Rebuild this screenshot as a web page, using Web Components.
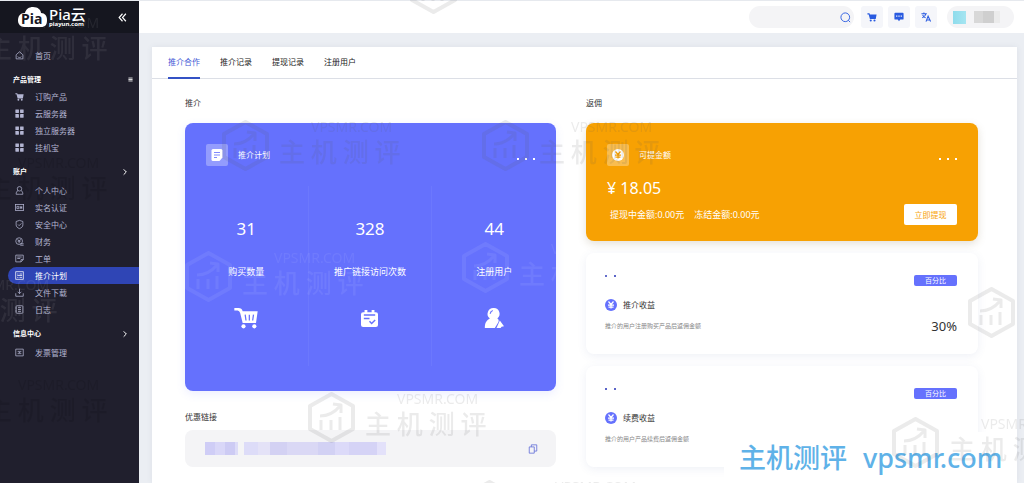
<!DOCTYPE html>
<html lang="zh-CN">
<head>
<meta charset="utf-8">
<title>Pia云 推介计划</title>
<style>
body { margin: 0; font-family: "Noto Sans", "Noto Sans CJK SC", sans-serif; font-size: 8px; line-height: 12px; color: #333; background: #ebeef3; }
</style>
</head>
<body>
<pia-app></pia-app>
<script>
const define = (name, html, setup) => {
  const tpl = document.createElement('template');
  tpl.innerHTML = '<style>:host,*{box-sizing:border-box}button{font:inherit;color:inherit;border:0;padding:0;margin:0;background:none;cursor:pointer}a{color:inherit;text-decoration:none}</style>' + html;
  customElements.define(name, class extends HTMLElement {
    constructor() {
      super();
      this.attachShadow({ mode: 'open' }).append(tpl.content.cloneNode(true));
    }
    connectedCallback() { if (setup) setup(this, this.shadowRoot); }
  });
};

/* Line icons use the stroke, solid icons set fill on their own shapes. All on a 24 unit grid. */
const S = 'fill="currentColor" stroke="none"';
const ICONS = {
  home: '<path d="M3 10 12 2l9 8v11H3zM7 15c2 3 8 3 10 0"/>',
  cart: `<path ${S} d="M1 3h5l1 3h16l-2 11H7L4 6H1z"/><circle ${S} cx="9" cy="20.500" r="2.500"/><circle ${S} cx="18" cy="20.500" r="2.500"/>`,
  grid: `<g ${S}><rect x="1" y="1" width="9.500" height="9.500" rx="1"/><rect x="13.500" y="1" width="9.500" height="9.500" rx="1"/><rect x="1" y="13.500" width="9.500" height="9.500" rx="1"/><rect x="13.500" y="13.500" width="9.500" height="9.500" rx="1"/></g>`,
  user: '<circle cx="12" cy="7.500" r="6"/><path d="M8 12c-4 2-5 6-5 10h18c0-4-1-8-5-10"/>',
  idcard: '<rect x="1" y="4" width="22" height="16"/><path d="M5 9h5v6H5zM14 8v8M18 8v8M14 12h5"/>',
  shield: '<path d="M12 1 21 4v9c0 5-4 8-9 10-5-2-9-5-9-10V4zM8 12l3 3 6-6"/>',
  money: '<circle cx="11" cy="11" r="9"/><path d="m7 6 4 5 4-5M7 11h8M11 11v6M14 18h9M14 22h9"/>',
  ticket: '<path d="M2 3h20v12l-6 6H2zM6 8h12M6 12h8M22 15h-6v6"/>',
  plan: '<rect x="2" y="2" width="20" height="20"/><path d="M6 8h3M12 8h7M6 12h13M6 17h3M12 17h7"/>',
  download: '<path d="M2 14v8h20v-8M12 2v13M7 10l5 5 5-5"/>',
  log: '<rect x="3" y="2" width="18" height="20" rx="2"/><path d="M8 7h8M8 12h8M8 17h8M1 8h3M1 16h3"/>',
  invoice: '<path d="M2 3h20v18H2zM7 9h10M7 15h10M10 12h4"/>',
  right: '<path d="m8 4 8 8-8 8" stroke-width="3"/>',
  menu: '<path d="M2 5h20M2 12h20M2 19h20" stroke-width="4"/>',
  collapse: '<path d="m12 2-9 10 9 10M21 2l-9 10 9 10" stroke-width="3"/>',
  search: '<circle cx="11.500" cy="11.500" r="9.500"/><path d="m18 18 4 4"/>',
  chat: `<path ${S} d="M3 2h18q2 0 2 2v12q0 2-2 2h-6l-3 4-3-4H3q-2 0-2-2V4q0-2 2-2z"/><path stroke="#f5f6fa" stroke-width="3" d="M5 10h3M10.500 10h3M16 10h3"/>`,
  lang: '<path stroke-width="2.500" d="M1 4h13M7 1v3M3 14c5-2 8-6 9-10M4 7c1 4 4 6 7 7M12 23l5-13 6 13M14 19h7"/>',
  note: `<path ${S} d="M4 0h16q3 0 3 3v14l-6 7H4q-3 0-3-3V3q0-3 3-3z"/><path stroke="#7f89fd" d="M6 7h12M6 12h12M6 17h6"/>`,
  coin: `<circle ${S} cx="12" cy="12" r="12"/><path stroke="var(--coin,#6571fd)" stroke-width="2.500" d="m7 5 5 6 5-6M6 12h12M7 16h10M12 11v8"/>`,
  copy: '<path d="M3 7h12v15H3zM8 7V2h13v15h-6"/>',
  bigcart: `<path ${S} d="M-2 0h5q4 0 5 4h18l-2 14H8L5 6Q4 3 2 3h-4z"/><path stroke="#6571fd" stroke-width="1.500" d="m11 8 1 7M16 8v7M21 8l-1 7"/><circle ${S} cx="9" cy="22" r="2.500"/><circle ${S} cx="22" cy="22" r="2.500"/>`,
  calendar: `<path ${S} d="M3 3h2V0h4v3h6V0h4v3h2q3 0 3 3v15q0 3-3 3H3q-3 0-3-3V6q0-3 3-3z"/><path stroke="#6571fd" d="M4 7h16M4 12h8M12 16l3 3 5-5"/>`,
  person: `<path ${S} d="M12 0a7 7 0 0 1 4 12.500c2 1 2 3 1 5l-4 6.500H1c0-7 2-9 6-11.500A7 7 0 0 1 12 0zM19 15l5 7-3 .500-1 1.500h-5z"/><path stroke="#6571fd" stroke-width="1.500" d="M7.500 7a4.500 4.500 0 0 1 3-4"/>`
};
define('pia-icon', `<style>:host{display:block;flex:none;width:var(--s,10px);height:var(--s,10px)}svg{display:block;width:100%;height:100%;overflow:visible}</style>
<svg viewBox="0 0 24 24" fill="none" stroke="currentColor" stroke-width="2" aria-hidden="true"></svg>`,
  (el, root) => { root.querySelector('svg').innerHTML = ICONS[el.getAttribute('name')]; });

define('pia-logo', `<style>
:host{display:flex;align-items:center;gap:2px;color:#fff}
svg{width:29px;height:21px;flex:none}
.name{font-size:15px;line-height:13px;font-weight:500;white-space:nowrap}
.site{font-size:6px;line-height:6px;font-weight:700}
</style>
<svg viewBox="0 0 29 21" aria-hidden="true"><path fill="#fff" d="M6 20a6 6 0 0 1-6-6C0 9 2 6 7 6 8 2 11 0 15 0c5 0 8 3 8 6 4 0 6 3 6 7 0 5-2 7-6 7z"/>
<text x="3" y="17" font-size="14" font-weight="700" fill="#15161f">Pia</text></svg>
<div><div class="name">Pia云</div><div class="site">piayun.com</div></div>`);

define('nav-item', `<style>
:host{display:block;padding-left:8px;color:#b3b5d2}
a{display:flex;align-items:center;gap:10px;height:17px;padding-left:7px;border-radius:9px 0 0 9px}
:host([active]) a{background:#2f45b5;color:#fff}
.icon{width:10px}
pia-icon{--s:9px}
</style><a href="#"><span class="icon"></span><slot></slot></a>`,
  (el, root) => {
    const icon = document.createElement('pia-icon');
    icon.setAttribute('name', el.getAttribute('icon'));
    root.querySelector('.icon').append(icon);
    if (el.hasAttribute('active')) root.querySelector('a').setAttribute('aria-current', 'page');
  });

define('nav-group', `<style>
:host{display:block;margin-top:7px}
button{display:flex;align-items:center;justify-content:space-between;width:100%;height:17px;padding:0 10px 0 13px;margin-bottom:2px;color:#fff;font-size:7px;font-weight:700}
:host([main]) button{margin-bottom:0;padding-right:6px}
pia-icon{--s:8px}
:host([main]) pia-icon{--s:5px}
</style><button type="button"><span></span></button><slot></slot>`,
  (el, root) => {
    root.querySelector('span').textContent = el.getAttribute('label');
    const icon = document.createElement('pia-icon');
    icon.setAttribute('name', el.hasAttribute('main') ? 'menu' : 'right');
    root.querySelector('button').append(icon);
  });

define('pia-sidebar', `<style>
:host{display:block;background:#201f2d}
header{display:flex;align-items:center;justify-content:space-between;height:32px;padding:0 12px 0 18px;margin-bottom:14px;background:#15161f;color:#fff}
header pia-icon{--s:9px}
</style>
<header><pia-logo></pia-logo><button type="button" aria-label="收起菜单"><pia-icon name="collapse"></pia-icon></button></header>
<nav>
<nav-item icon="home">首页</nav-item>
<nav-group label="产品管理" main>
<nav-item icon="cart">订购产品</nav-item><nav-item icon="grid">云服务器</nav-item><nav-item icon="grid">独立服务器</nav-item><nav-item icon="grid">挂机宝</nav-item>
</nav-group>
<nav-group label="账户">
<nav-item icon="user">个人中心</nav-item><nav-item icon="idcard">实名认证</nav-item><nav-item icon="shield">安全中心</nav-item><nav-item icon="money">财务</nav-item><nav-item icon="ticket">工单</nav-item><nav-item icon="plan" active>推介计划</nav-item><nav-item icon="download">文件下载</nav-item><nav-item icon="log">日志</nav-item>
</nav-group>
<nav-group label="信息中心"><nav-item icon="invoice">发票管理</nav-item></nav-group>
</nav>`);

define('pia-topbar', `<style>
:host{display:flex;justify-content:flex-end;align-items:center;height:32px;padding-right:10px;background:#fff;color:#2a5be0}
.search{display:flex;align-items:center;width:105px;height:22px;margin-right:7px;padding:0 2px 0 10px;border-radius:11px;background:#f4f4f6}
input{flex:1;min-width:0;border:0;outline:0;background:none;font:inherit}
.search button{width:11px;margin-right:1px}
.search pia-icon{--s:11px}
.tools{display:flex;gap:5px}
.tools button{display:grid;place-items:center;width:22px;height:22px;border-radius:3px;background:#f5f6fa}
.profile{display:flex;align-items:center;gap:8px;width:67px;height:22px;margin-left:10px;padding-left:6px;border-radius:11px;background:#f4f4f6}
.avatar{width:13px;height:13px;background:linear-gradient(90deg,#8fdcec,#a5e5f1)}
.mosaic{width:26px;height:12px;background:linear-gradient(90deg,#d8d8d8 35%,#cfcfcf 35% 75%,#ebebeb 75%)}
</style>
<div class="search"><input type="text" aria-label="搜索"><button type="button" aria-label="搜索"><pia-icon name="search"></pia-icon></button></div>
<div class="tools"><button type="button" aria-label="购物车"><pia-icon name="cart"></pia-icon></button><button type="button" aria-label="消息"><pia-icon name="chat"></pia-icon></button><button type="button" aria-label="语言"><pia-icon name="lang"></pia-icon></button></div>
<button type="button" class="profile" aria-label="用户"><span class="avatar"></span><span class="mosaic"></span></button>`);

define('pia-tabs', `<style>
:host{display:flex;gap:20px;height:32px;padding:0 16px;border-bottom:1px solid #dcdfe6}
a{display:flex;align-items:center;height:32px;color:#222;border-bottom:2px solid transparent}
a[aria-current]{color:#4257d6;border-color:#3452c5}
</style><a href="#" aria-current="page">推介合作</a><a href="#">推介记录</a><a href="#">提现记录</a><a href="#">注册用户</a>`);

define('dot-row', `<style>:host{display:flex;gap:6px}i{width:2px;height:2px;background:currentColor}</style>`,
  (el, root) => { for (let n = 0; n < +el.getAttribute('count'); n++) root.append(document.createElement('i')); });

define('card-head', `<style>
:host{display:flex;align-items:center;height:22px;color:#fff}
.badge{display:grid;place-items:center;width:22px;height:22px;margin-right:10px;border-radius:2px;background:rgba(255,255,255,.3)}
.badge ::slotted(*){--s:12px}
dot-row{margin:8px 0 0 auto}
</style><span class="badge"><slot name="icon"></slot></span><slot></slot><dot-row count="3"></dot-row>`);

define('stat-item', `<style>
:host{display:flex;flex-direction:column;align-items:center;padding-top:31px}
:host(:not(:last-child)){border-right:1px solid rgba(255,255,255,.05)}
.value{font-size:17px;line-height:24px}
.label{margin:24px 0 28px;font-size:9px;line-height:14px}
.icon{display:grid;place-items:center;height:22px}
::slotted(pia-icon){--s:20px}
::slotted(pia-icon[name=calendar]){--s:17px}
</style><span class="value"><slot name="value"></slot></span><span class="label"><slot></slot></span><span class="icon"><slot name="icon"></slot></span>`);

define('plan-card', `<style>
:host{display:block;height:268px;padding:21px 0;border-radius:8px;background:#6571fd;color:#fff;box-shadow:0 3px 10px rgba(101,113,253,.12)}
card-head{padding:0 21px}
.stats{display:grid;grid-template-columns:repeat(3,1fr);height:180px;margin-top:20px}
</style>
<card-head><pia-icon slot="icon" name="note"></pia-icon>推介计划</card-head>
<div class="stats">
<stat-item><span slot="value">31</span>购买数量<pia-icon slot="icon" name="bigcart"></pia-icon></stat-item>
<stat-item><span slot="value">328</span>推广链接访问次数<pia-icon slot="icon" name="calendar"></pia-icon></stat-item>
<stat-item><span slot="value">44</span>注册用户<pia-icon slot="icon" name="person"></pia-icon></stat-item>
</div>`);

define('balance-card', `<style>
:host{display:block;height:118px;padding:21px;border-radius:8px;background:#f7a103;color:#fff;box-shadow:0 3px 8px rgba(120,100,60,.2)}
pia-icon{--coin:#f7a103}
.amount{margin-top:10px;font-size:16px;line-height:24px}
.row{display:flex;align-items:center;gap:10px;margin-top:4px;padding-left:3px;font-size:9px}
.row button{width:53px;height:21px;margin-left:auto;border-radius:2px;background:#fff;color:#f7a103;font-size:8px}
</style>
<card-head><pia-icon slot="icon" name="coin"></pia-icon>可提金额</card-head>
<div class="amount">¥ 18.05</div>
<div class="row"><span>提现中金额:0.00元</span><span>冻结金额:0.00元</span><button type="button">立即提现</button></div>`);

define('rate-card', `<style>
:host{display:block;height:101px;padding:22px 21px 0 19px;border-radius:8px;background:#fff;box-shadow:0 2px 10px rgba(70,90,160,.09)}
.top,.bottom{display:flex;justify-content:space-between}
dot-row{color:#5a64c8;gap:7px}
.tag{width:43px;height:11px;border-radius:2px;background:#6571fd;color:#fff;font-size:7px;line-height:11px;text-align:center}
.name{display:flex;align-items:center;gap:6px;height:12px;margin-top:13px}
.name pia-icon{--s:12px;color:#6571fd;--coin:#fff}
.bottom{align-items:center;margin-top:6px;font-size:6px;color:#888}
.rate{font-size:13px;line-height:18px;color:#333}
</style>
<div class="top"><dot-row count="2"></dot-row><span class="tag">百分比</span></div>
<div class="name"><pia-icon name="coin"></pia-icon><slot></slot></div>
<div class="bottom"><slot name="note"></slot><span class="rate">30%</span></div>`);

define('link-box', `<style>
:host{display:flex;align-items:center;gap:6px;height:37px;padding:0 18px 0 20px;border-radius:8px;background:#f4f4f6}
i{height:13px}
.a{width:33px;background:linear-gradient(90deg,#cfcdf6 30%,#d9d7f8 30% 60%,#cdcbf4 60% 90%,#dddcf8 90%)}
.b{width:142px;background:linear-gradient(90deg,#dddcf8 10%,#e4e2f7 10% 18%,#d3d1f3 18% 30%,#dad8f5 30% 52%,#d2d1f4 52% 64%,#dcdaf9 64% 74%,#d5d3f6 74% 94%,#e3e1fa 94%)}
button{margin-left:auto;color:#6571d8}
</style><i class="a"></i><i class="b"></i><button type="button" aria-label="复制"><pia-icon name="copy"></pia-icon></button>`);

define('pia-content', `<style>
:host{display:block;background:#fff;box-shadow:0 0 6px rgba(60,80,120,.08)}
.cols{display:grid;grid-template-columns:371fr 392fr;gap:30px;padding:18px 39px 16px 33px}
h2{margin:0 0 14px;font-size:8px;line-height:12px;font-weight:400;color:#333}
.link{margin-top:20px;margin-bottom:7px}
balance-card,rate-card{margin-bottom:12px}
rate-card:last-child{margin-bottom:0}
</style>
<pia-tabs></pia-tabs>
<div class="cols">
<section><h2>推介</h2><plan-card></plan-card><h2 class="link">优惠链接</h2><link-box></link-box></section>
<section><h2>返佣</h2><balance-card></balance-card>
<rate-card>推介收益<span slot="note">推介的用户注册购买产品后返佣金额</span></rate-card>
<rate-card>续费收益<span slot="note">推介的用户产品续费后返佣金额</span></rate-card></section>
</div>`);

define('water-mark', `<style>
:host{position:absolute;display:grid;grid-template-columns:47px auto;column-gap:10px;color:rgba(90,90,90,.12);white-space:nowrap}
:host([light]){color:rgba(255,255,255,.07)}
:host([faint]){color:rgba(0,0,0,.1)}
svg{width:47px;height:51px}
.site{font-size:14px;line-height:14px;padding-left:32px}
.name{font-size:26px;line-height:34px;font-weight:500;font-family:"Noto Sans CJK SC",sans-serif}
</style>
<svg viewBox="0 0 47 51" fill="none" stroke="currentColor" stroke-width="4" stroke-linejoin="round" aria-hidden="true"><path d="M23.500 2 45 14v23L23.500 49 2 37V14z"/><path stroke-width="3" d="M12 24c9 0 15-4 20-10M25 12l8 1v8M13 28v10M23 28v10M32 25v13"/></svg>
<div><div class="site">VPSMR.COM</div><div class="name">主 机 测 评</div></div>`);

define('mark-layer', `<style>
:host{position:fixed;inset:0;overflow:hidden;pointer-events:none}
.side{position:absolute;left:0;top:0;bottom:0;width:139px;overflow:hidden}
.top{position:absolute;left:400px;top:0;width:66px;height:33px;overflow:hidden}
</style><div class="side"></div><div class="top"></div>`,
  (el, root) => {
    const put = (parent, x, y, kind) => {
      const m = document.createElement('water-mark');
      if (kind) m.setAttribute(kind, '');
      m.style.left = x + 'px'; m.style.top = y + 'px';
      parent.append(m);
    };
    const side = root.querySelector('.side');
    [[-71, 16, 'light'], [-71, 156, 'faint'], [-121, 278, 'light'], [-71, 378, 'faint']].forEach(a => put(side, ...a));
    [[222, 120], [482, 120], [185, 251, 'light'], [462, 242, 'light'], [968, 287], [892, 417], [308, 392], [466, 480]].forEach(a => put(root, ...a));
    put(root.querySelector('.top'), 10, -37);
  });

define('brand-stamp', `<style>
:host{position:fixed;right:14px;bottom:0;width:286px;height:51px;padding:6px 0 0 15px;background:#fff;color:#5fb2e8;font-size:27px;line-height:40px;white-space:nowrap;font-weight:500;display:flex;gap:16px}
</style><span>主机测评</span><span>vpsmr.com</span>`);

define('pia-app', `<style>
:host{display:grid;grid-template-columns:139px minmax(0,1fr);min-height:100vh;border-top:1px solid #e6e9ee}
.page{display:flex;flex-direction:column}
main{flex:1;display:flex;padding:14px 7px 0 13px;background:#ebeef3}
pia-content{flex:1;min-width:0}
</style>
<pia-sidebar></pia-sidebar>
<div class="page"><pia-topbar></pia-topbar><main><pia-content></pia-content></main></div>
<brand-stamp></brand-stamp><mark-layer></mark-layer>`);
</script>
</body>
</html>
